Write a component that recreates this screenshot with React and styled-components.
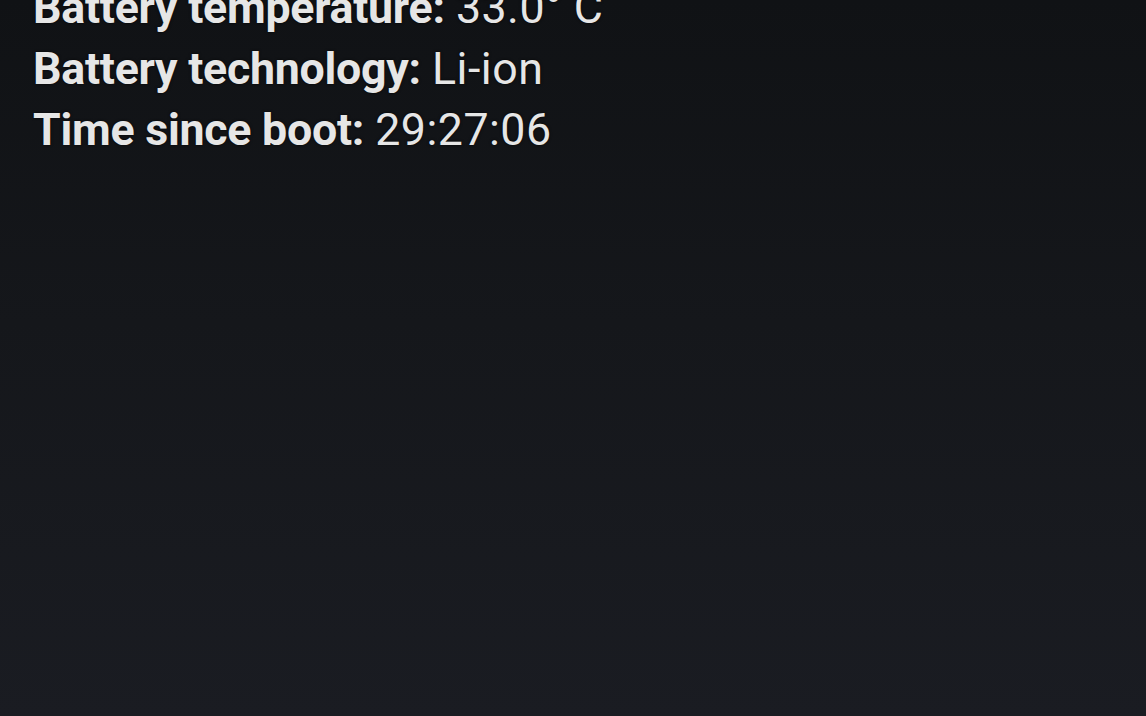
import React from "react";
import styled, { createGlobalStyle } from "styled-components";

const Global = createGlobalStyle`
  html, body { margin: 0; padding: 0; height: 100%; }
  body { background: #131518; overflow: hidden; }
  #root { height: 100%; }
`;

const Screen = styled.div`
  width: 1146px;
  height: 716px;
  overflow: hidden;
  background: linear-gradient(180deg, #101215 0%, #15171b 45%, #1a1c22 100%);
  font-family: Roboto, "Noto Sans", sans-serif;
  color: #e6e6e6;
`;

const InfoList = styled.div`
  display: flex;
  flex-direction: column;
  margin-top: -22px;
  padding-left: 33px;
`;

const Row = styled.div`
  font-size: 44.7px;
  line-height: 61px;
  white-space: nowrap;
  text-shadow: 0 0 3px rgba(0, 0, 0, 0.8);
`;

const Label = styled.span`
  font-weight: 700;
  letter-spacing: -0.25px;
`;

const Value = styled.span`
  font-weight: 400;
  letter-spacing: 0.5px;
`;

const rows = [
  ["Battery temperature:", "33.0° C"],
  ["Battery technology:", "Li-ion"],
  ["Time since boot:", "29:27:06"],
];

export default function App() {
  return (
    <>
      <Global />
      <Screen>
        <InfoList>
          {rows.map(([l, v]) => (
            <Row key={l}>
              <Label>{l}</Label> <Value>{v}</Value>
            </Row>
          ))}
        </InfoList>
      </Screen>
    </>
  );
}
